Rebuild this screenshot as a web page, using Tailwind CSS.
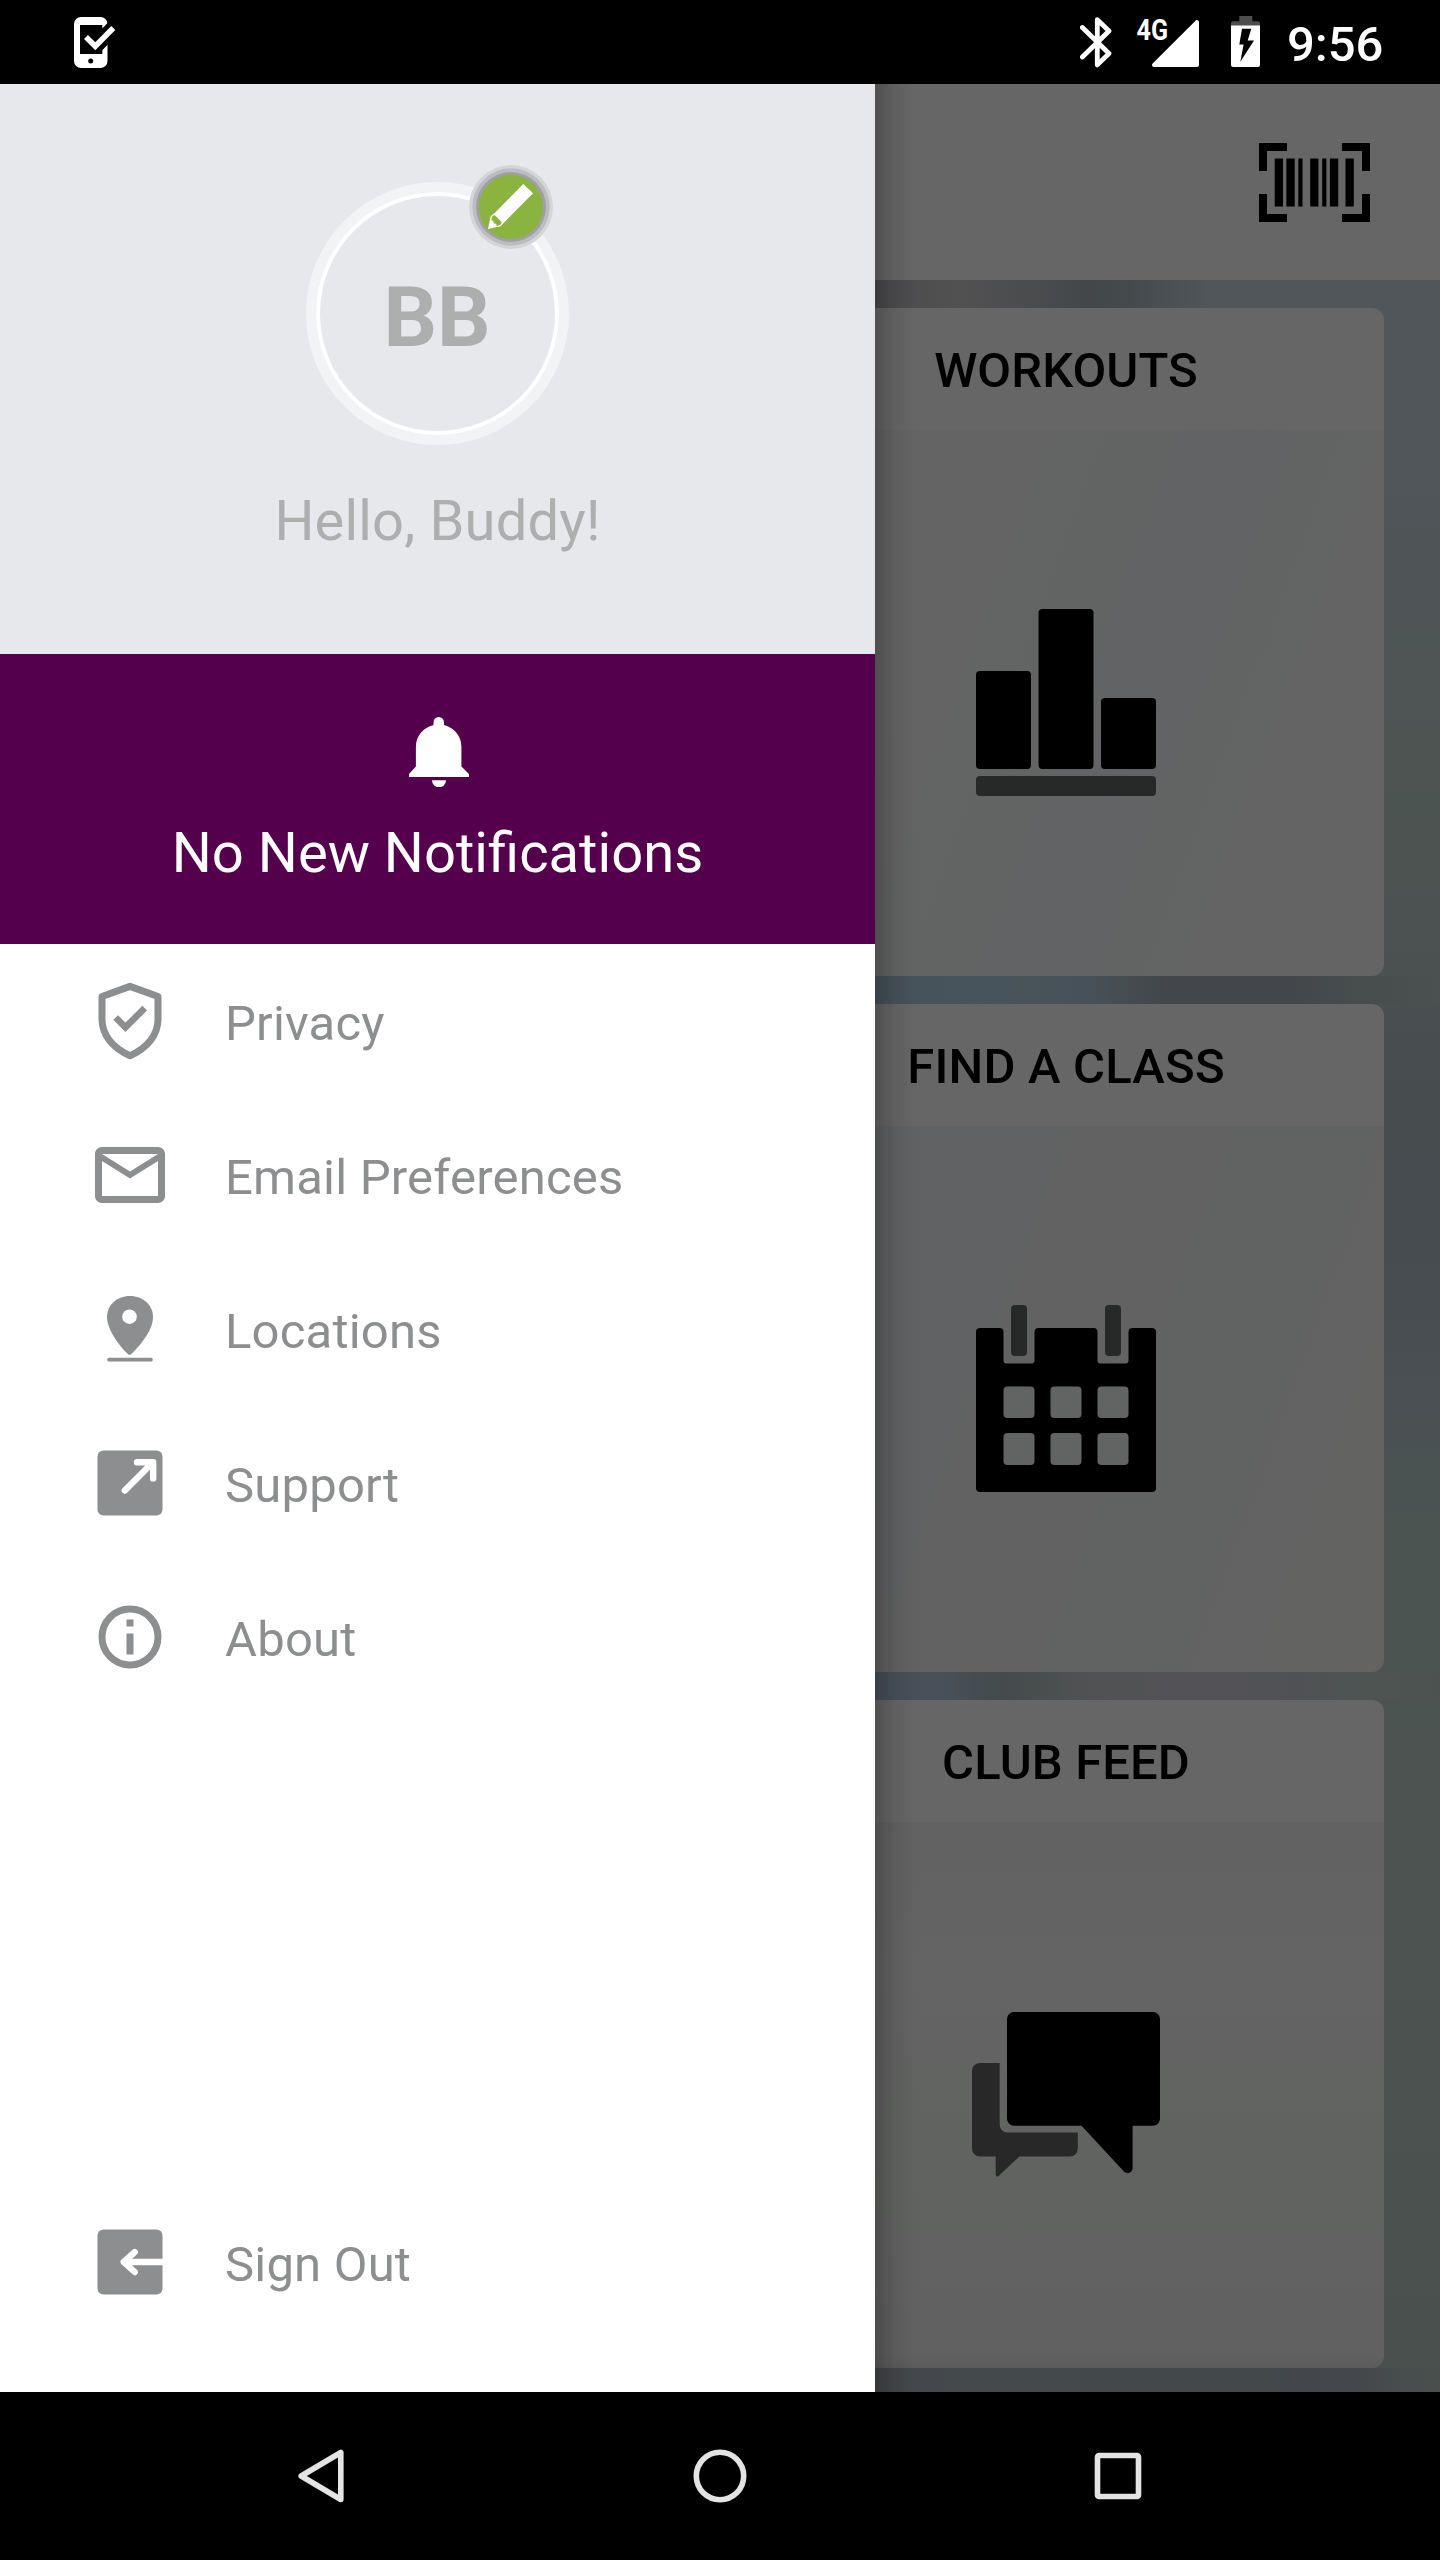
<!DOCTYPE html>
<html lang="en">

<head>
    <meta charset="UTF-8">
    <meta name="viewport" content="width=device-width, initial-scale=1.0">
    <title>Club App</title>
    <script src="https://cdn.jsdelivr.net/npm/@tailwindcss/browser@4"></script>
</head>

<body class="bg-black font-[Roboto,sans-serif]">
    <div class="relative w-[1440px] h-[2560px] flex flex-col overflow-hidden">

        <!-- Status bar -->
        <header class="h-[84px] shrink-0 bg-black text-white flex items-start justify-between pl-[74px] pr-14">
            <svg class="w-[42px] h-[51px] mt-[17px]" viewBox="0 0 42 51">
                <rect width="33.5" height="51" rx="7" fill="#fff" />
                <path d="M6 8h22.3v29H6z" fill="#000" />
                <circle cx="16.7" cy="44" r="2.5" fill="#000" />
                <path d="M21.3 29.3L42 8.3" fill="none" stroke="#000" stroke-width="15.4" />
                <path d="M12 20l9.3 9.3L39.3 11" fill="none" stroke="#fff" stroke-width="5.6" />
            </svg>
            <div class="flex items-start">
                <svg class="w-8 h-[51px] mt-[17px] mr-[23px]" viewBox="0 0 32 51" fill="none" stroke="#fff" stroke-width="4.8" stroke-linecap="round" stroke-linejoin="round">
                    <path d="M2.4 10.5L29 36.5 17.3 47.9V2.6L29 14 2.4 40" />
                </svg>
                <svg class="w-16 h-[59px] mt-[9px] mr-8 overflow-visible" viewBox="-2 -8 64 59" fill="#fff">
                    <text x="-0.5" y="22.5" font-family="Roboto" font-weight="700" font-size="29.5" textLength="31.5" lengthAdjust="spacingAndGlyphs">4G</text>
                    <path d="M58.5 3.8a2 2 0 0 1 3.5 1.4V48a2 2 0 0 1-2 2H17a2 2 0 0 1-1.4-3.4z" />
                </svg>
                <svg class="w-[29px] h-[51px] mt-4 mr-[27px]" viewBox="0 0 29 51">
                    <path d="M8.3 0h13v5.3H27a2 2 0 0 1 2 2V10H0V7.3a2 2 0 0 1 2-2h6.3z" fill="#4d4d4d" />
                    <path d="M0 9.5h29V49a2 2 0 0 1-2 2H2a2 2 0 0 1-2-2z" fill="#fff" />
                    <path d="M11 12.7h9.3L16.7 24.500H23L9.300 45.700l3.300-17.200H8.300z" fill="#000" />
                </svg>
                <span class="w-[97px] mt-4 text-[49px] leading-[58px] font-medium">9:56</span>
            </div>
        </header>

        <!-- Home screen, dimmed while the drawer is open -->
        <main class="h-[2308px] shrink-0 flex flex-col text-black bg-[linear-gradient(180deg,#50565a_0,#505659_400px,#4c5451_720px,#4b5151_890px,#474c4e_1000px,#464c50_1180px,#4a5053_1310px,#4b5451_1450px,#4c5350_1800px,#4a504e_2308px)]">
            <div class="h-[196px] shrink-0 bg-[#666666] flex items-center justify-end pr-[70px]">
                <svg class="w-[111px] h-[79px]" viewBox="0 0 111 79">
                    <path d="M4 28V4h24M83 4h24v24M107 51v24H83M28 75H4V51" fill="none" stroke="#000" stroke-width="8" />
                    <path d="M15.7 15.500H24v48h-8.300zM27.400 15.500h8.300v48h-8.300zM39.300 15.500h4.200v48h-4.200zM51.200 15.500h8.200v48h-8.200zM63.200 15.500h4.200v48h-4.200zM70.900 15.500h8.300v48h-8.300zM86.500 15.500h8.300v48h-8.300z" />
                </svg>
            </div>

            <div class="h-7 shrink-0 bg-[linear-gradient(90deg,#4b4b4d_875px,#515152_960px,#4b4c4e_1030px,#43474a_1090px,#454a4d_1130px,#50565a_1210px,#50565a_1440px)]"></div>
            <section class="ml-[748px] w-[636px] h-[668px] shrink-0 flex flex-col rounded-xl overflow-hidden">
                <h2 class="h-[122px] bg-[#666666] flex items-center justify-center pt-1 text-[49px] font-medium tracking-[0.1px]">WORKOUTS</h2>
                <div class="grow flex items-center justify-center pb-px bg-[linear-gradient(110deg,#636463_30%,#626364_60%,#636463_80%)]">
                    <svg class="w-[180px] h-[187px]" viewBox="0 0 180 187">
                        <rect y="62" width="55" height="98" rx="4" />
                        <rect x="62.5" width="55" height="160" rx="4" />
                        <rect x="125" y="89" width="55" height="71" rx="4" />
                        <rect y="167" width="180" height="20" rx="4" fill="#272928" />
                    </svg>
                </div>
            </section>

            <div class="h-7 shrink-0 bg-[linear-gradient(90deg,#46525a_875px,#48545b_980px,#475159_1090px,#43464a_1170px,#43464a_1280px,#474c4d_1350px,#4b5151_1440px)]"></div>
            <section class="ml-[748px] w-[636px] h-[668px] shrink-0 flex flex-col rounded-xl overflow-hidden">
                <h2 class="h-[122px] bg-[#656665] flex items-center justify-center pt-1 text-[49px] font-medium tracking-[0.2px]">FIND A CLASS</h2>
                <div class="grow flex items-center justify-center pb-px bg-[linear-gradient(110deg,#616264_25%,#626262_50%,#616362_70%,#636362_90%)]">
                    <svg class="w-[180px] h-[187px]" viewBox="0 0 180 187">
                        <path fill-rule="evenodd" d="M4 23h19.500a4 4 0 0 1 4 4v28.500a3 3 0 0 0 3 3h25a3 3 0 0 0 3-3V27a4 4 0 0 1 4-4h55a4 4 0 0 1 4 4v28.500a3 3 0 0 0 3 3h25a3 3 0 0 0 3-3V27a4 4 0 0 1 4-4H176a4 4 0 0 1 4 4v156a4 4 0 0 1-4 4H4a4 4 0 0 1-4-4V27a4 4 0 0 1 4-4z" />
                        <g fill="#626463">
                            <rect x="27.5" y="81.5" width="31" height="31.5" rx="4" />
                            <rect x="74.5" y="81.5" width="31" height="31.5" rx="4" />
                            <rect x="121.5" y="81.5" width="31" height="31.5" rx="4" />
                            <rect x="27.5" y="128" width="31" height="32" rx="4" />
                            <rect x="74.5" y="128" width="31" height="32" rx="4" />
                            <rect x="121.5" y="128" width="31" height="32" rx="4" />
                        </g>
                        <g fill="#272928">
                            <rect x="35" width="16" height="51" rx="4" />
                            <rect x="129" width="16" height="51" rx="4" />
                        </g>
                    </svg>
                </div>
            </section>

            <div class="h-7 shrink-0 bg-[linear-gradient(90deg,#47505a_875px,#48505a_940px,#444b4c_1000px,#505152_1080px,#535357_1200px,#505154_1300px,#4d5452_1370px,#4b5250_1440px)]"></div>
            <section class="ml-[748px] w-[636px] h-[668px] shrink-0 flex flex-col rounded-xl overflow-hidden">
                <h2 class="h-[122px] bg-[#656665] flex items-center justify-center pt-1 text-[49px] font-medium tracking-[0.1px]">CLUB FEED</h2>
                <div class="grow flex items-center justify-center pb-px bg-[linear-gradient(0deg,#5b5b5b_0,#616161_12px,#616361_180px,#636463_400px,#626262_546px)]">
                    <svg class="w-[188px] h-[165px]" viewBox="0 0 188 165">
                        <path d="M42 0h139a7 7 0 0 1 7 7v99.700a7 7 0 0 1-7 7h-20.400V156c0 5-5 6-8.200 4l-42.900-46.300H42a7 7 0 0 1-7-7V7a7 7 0 0 1 7-7z" />
                        <path d="M8 51h19.700v61.500a8 8 0 0 0 8 8h70.100v16a8 8 0 0 1-8 8H47.400L26 164.400q-2.300.8-2.300-1.900v-18H8a8 8 0 0 1-8-8V59a8 8 0 0 1 8-8z" fill="#282828" />
                    </svg>
                </div>
            </section>
            <div class="h-6 shrink-0 bg-[linear-gradient(90deg,#45464a_875px,#44494c_960px,#43484b_1250px,#44474b_1350px,#4a504e_1440px)]"></div>
        </main>

        <!-- Navigation bar -->
        <footer class="h-[168px] shrink-0 bg-black flex items-center justify-between px-[298px]">
            <svg class="w-[46px] h-[54px]" viewBox="0 0 46 54" fill="none" stroke="#e4e4e4" stroke-width="5.6" stroke-linejoin="round">
                <path d="M3.2 27L42.800 3.500v47z" />
            </svg>
            <svg class="w-[54px] h-[54px] ml-0.5" viewBox="0 0 54 54" fill="none" stroke="#e4e4e4" stroke-width="5.6">
                <circle cx="27" cy="27" r="23.7" />
            </svg>
            <svg class="w-12 h-12" viewBox="0 0 48 48" fill="none" stroke="#e4e4e4" stroke-width="5.6">
                <rect x="3.5" y="3.5" width="41" height="41" rx="1.5" />
            </svg>
        </footer>

        <!-- Drawer -->
        <aside class="absolute left-0 top-[84px] w-[875px] h-[2308px] bg-white flex flex-col text-[#8d8e8f]">
            <div class="absolute left-full top-0 w-10 h-full bg-linear-to-r from-black/22 via-black/7 to-transparent"></div>

            <div class="h-[570px] shrink-0 bg-[#e7e8ec] text-[#adaeae] flex flex-col items-center pt-[98px]">
                <div class="relative size-[263px] rounded-full border-[10px] border-[#f2f3f5]">
                    <div class="size-full rounded-full border-4 border-white flex items-center justify-center pt-2 pr-px text-[84px] font-bold">BB</div>
                    <svg class="absolute left-[153px] -top-[27px] size-[84px]" viewBox="0 0 252 252">
                        <circle cx="126" cy="126" r="126" fill="#d4d5d8" />
                        <circle cx="126" cy="126" r="116" fill="#bcbdbf" />
                        <circle cx="126" cy="126" r="105" fill="#9fa0a3" />
                        <circle cx="126" cy="126" r="96.5" fill="#8ab340" />
                        <path d="M163 57l29 28-88 89-9 10-38 8 8-38 13-11z" fill="#fff" />
                        <path d="M69 156q4-6 9-5l20 20q0 7-7 10l-8 2q0-8-8-8-1-8-8-10z" fill="#8ab340" />
                    </svg>
                </div>
                <p class="mt-[43px] text-[56px] leading-[66px] tracking-[0.2px]">Hello, Buddy!</p>
            </div>

            <div class="h-[290px] shrink-0 bg-[#54004d] text-white flex flex-col items-center pt-[63px]">
                <svg class="w-[60px] h-[70px] ml-[3px]" viewBox="0 0 60 70" fill="#fff">
                    <path d="M24.5 5.500a5.250 5.500 0 0 1 10.500 0V8C45 10.500 52.400 18.500 52.400 30v19.500L60 57v3H0v-3l6.900-7.500V30C6.900 18.500 14.500 10.500 24.500 8z" />
                    <path d="M23 63.300h14a7 7 0 0 1-14 0z" />
                </svg>
                <p class="mt-[33px] text-[56.2px] leading-[66px]">No New Notifications</p>
            </div>

            <nav class="grow flex flex-col pb-[53px] text-[49px] tracking-[0.2px]">
                <a class="h-[154px] flex items-center gap-[53px] pl-[88px]">
                    <svg class="size-[84px]" viewBox="0 0 24 24" fill="none" stroke="currentColor" stroke-width="2">
                        <path d="M12 2.100L20 5v6.500c0 4.400-3 8.300-8 10.400-5-2.100-8-6-8-10.400V5z" stroke-linejoin="round" />
                        <path d="M7.900 11l2.800 2.800 5.500-5.500" stroke-width="1.9" />
                    </svg>
                    <span class="pt-[5px]">Privacy</span>
                </a>
                <a class="h-[154px] flex items-center gap-[53px] pl-[88px]">
                    <svg class="size-[84px]" viewBox="0 0 24 24" fill="currentColor">
                        <path d="M20 4H4c-1.100 0-2 .9-2 2v12c0 1.100.9 2 2 2h16c1.100 0 2-.9 2-2V6c0-1.100-.9-2-2-2zm0 14H4V8l8 5 8-5v10zm-8-7L4 6h16l-8 5z" />
                    </svg>
                    <span class="pt-[5px]">Email Preferences</span>
                </a>
                <a class="h-[154px] flex items-center gap-[53px] pl-[88px]">
                    <svg class="size-[84px]" viewBox="0 0 84 84" fill="currentColor">
                        <path d="M42 9C28.500 9 19 18.500 19 30c0 12.500 12 28.500 21 37.300q1.500 1.400 3 0C53 57.500 65 43 65 30 65 18 55 9 42 9z" />
                        <circle cx="41.5" cy="29.7" r="7.3" fill="#fff" />
                        <rect x="19.3" y="70.7" width="45.4" height="3.8" rx="1.5" />
                    </svg>
                    <span class="pt-[5px]">Locations</span>
                </a>
                <a class="h-[154px] flex items-center gap-[53px] pl-[88px]">
                    <svg class="size-[84px]" viewBox="0 0 84 84">
                        <rect x="9.5" y="9.5" width="65" height="65" rx="6" fill="currentColor" />
                        <path d="M36.800 49.500L64 22.300M49 21.200h16.200v16.200" fill="none" stroke="#fff" stroke-width="6.4" stroke-linecap="round" stroke-linejoin="round" />
                    </svg>
                    <span class="pt-[5px]">Support</span>
                </a>
                <a class="h-[154px] flex items-center gap-[53px] pl-[88px]">
                    <svg class="size-[84px]" viewBox="0 0 24 24" fill="currentColor">
                        <circle cx="12" cy="12" r="8" fill="none" stroke="currentColor" stroke-width="2" />
                        <path d="M11 7h2v2h-2zM11 11h2v6h-2z" />
                    </svg>
                    <span class="pt-[5px]">About</span>
                </a>
                <a class="h-[154px] mt-auto flex items-center gap-[53px] pl-[88px]">
                    <svg class="size-[84px]" viewBox="0 0 84 84">
                        <rect x="9.5" y="9.5" width="65" height="65" rx="6" fill="currentColor" />
                        <path d="M36 42h39M46.700 32.200L35.700 42l11 10" fill="none" stroke="#fff" stroke-width="6.4" stroke-linecap="round" stroke-linejoin="round" />
                    </svg>
                    <span class="pt-[5px]">Sign Out</span>
                </a>
            </nav>
        </aside>
    </div>
</body>

</html>
